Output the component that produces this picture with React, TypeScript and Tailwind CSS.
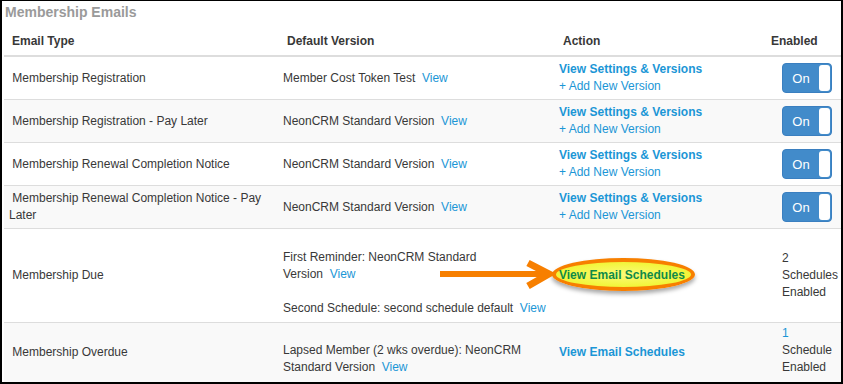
import React from "react";

const LINK = "text-[#1b96d6]";

function Toggle() {
  return (
    <div className="flex w-[50px] h-[30px] rounded-[4px] bg-[#428bca] border border-[#3a7fc0] py-[1px] pr-[1px]">
      <div className="flex-1 flex items-center justify-center text-white text-[13px] leading-none">On</div>
      <div className="w-[11px] bg-white rounded-[3px]" />
    </div>
  );
}

function Row({
  name,
  version,
  bg,
  first,
}: {
  name: React.ReactNode;
  version: string;
  bg?: boolean;
  first?: boolean;
}) {
  return (
    <div
      className={`grid grid-cols-[275px_276px_208px_78px] ${first ? "h-[42px]" : "h-[43px] border-t border-[#dddddd]"} ${bg ? "bg-[#f9f9f9]" : "bg-white"}`}
    >
      <div className="pl-[5px] flex items-center">
        <div>{name}</div>
      </div>
      <div className="pl-[4px] flex items-center">
        <div>
          {version}
          {"\u00a0 "}
          <span className={LINK}>View</span>
        </div>
      </div>
      <div className="pl-[4px] flex items-center">
        <div>
          <div className={`font-bold ${LINK}`}>View Settings &amp; Versions</div>
          <div className={LINK}>+ Add New Version</div>
        </div>
      </div>
      <div className="pl-[19px] flex items-center">
        <Toggle />
      </div>
    </div>
  );
}

export default function App() {
  return (
    <div className="relative w-[843px] h-[384px] overflow-hidden bg-white border-l-2 border-r-2 border-t border-b-2 border-black text-[12px] leading-[17px] text-[#383838] font-['Liberation_Sans',Arial,sans-serif]">
      <div className="h-[27px] pl-[3px] text-[14px] leading-[23px] font-bold text-[#9a9a9a]">
        Membership Emails
      </div>
      <div className="ml-[2px] w-[837px]">
        <div className="grid grid-cols-[275px_276px_208px_78px] h-[29px] border-b-2 border-[#dddddd] font-bold items-center">
          <div className="pl-[8px]">Email Type</div>
          <div className="pl-[8px]">Default Version</div>
          <div className="pl-[8px]">Action</div>
          <div className="pl-[8px]">Enabled</div>
        </div>
        <Row first name={"\u00a0Membership Registration"} version="Member Cost Token Test" />
        <Row bg name={"\u00a0Membership Registration - Pay Later"} version="NeonCRM Standard Version" />
        <Row name={"\u00a0Membership Renewal Completion Notice"} version="NeonCRM Standard Version" />
        <Row
          bg
          name={
            <>
              {"\u00a0Membership Renewal Completion Notice - Pay"}
              <br />
              Later
            </>
          }
          version="NeonCRM Standard Version"
        />
        {/* Membership Due */}
        <div className="grid grid-cols-[275px_276px_208px_78px] h-[94px] border-t border-[#dddddd] bg-white">
          <div className="pl-[5px] pb-[1px] flex items-center">
            <div>{"\u00a0Membership Due"}</div>
          </div>
          <div className="pl-[4px] pt-[20px]">
            <div>First Reminder: NeonCRM Standard</div>
            <div>
              Version{"\u00a0 "}
              <span className={LINK}>View</span>
            </div>
            <div className="mt-[17px] whitespace-nowrap">
              Second Schedule: second schedule default{"\u00a0 "}
              <span className={LINK}>View</span>
            </div>
          </div>
          <div className="pl-[4px] pb-[1px] flex items-center">
            <span className="relative inline-block font-bold text-[#0f8a47]">
              <span className="absolute left-[-7px] right-[-10px] top-[-9px] bottom-[-7px] rounded-[50%] border-[4px] border-[#f77f00] bg-[radial-gradient(ellipse_at_center,#fafb78_0%,#f3f53c_65%,#e3ea2c_100%)] shadow-[0_3px_4px_rgba(0,0,0,0.35)]" />
              <span className="relative">View Email Schedules</span>
            </span>
          </div>
          <div className="pl-[19px] pb-[1px] flex items-center">
            <div>
              <div>2</div>
              <div>Schedules</div>
              <div>Enabled</div>
            </div>
          </div>
        </div>
        {/* Membership Overdue */}
        <div className="grid grid-cols-[275px_276px_208px_78px] h-[60px] border-t border-[#dddddd] bg-[#f9f9f9]">
          <div className="pl-[5px] flex items-center">
            <div>{"\u00a0Membership Overdue"}</div>
          </div>
          <div className="pl-[4px] pt-[19px]">
            <div>Lapsed Member (2 wks overdue): NeonCRM</div>
            <div>
              Standard Version{"\u00a0 "}
              <span className={LINK}>View</span>
            </div>
          </div>
          <div className="pl-[4px] flex items-center">
            <span className={`font-bold ${LINK}`}>View Email Schedules</span>
          </div>
          <div className="pl-[19px] pt-[2px]">
            <div className={LINK}>1</div>
            <div>Schedule</div>
            <div>Enabled</div>
          </div>
        </div>
      </div>
      <svg
        className="absolute left-[-2px] top-[-1px] pointer-events-none"
        width="843"
        height="384"
        viewBox="0 0 843 384"
      >
        <line x1="440" y1="274" x2="546" y2="274" stroke="#f77f00" strokeWidth="6" />
        <polyline
          points="528,263 549,274 528,286"
          fill="none"
          stroke="#f77f00"
          strokeWidth="7"
          strokeLinejoin="miter"
        />
      </svg>
    </div>
  );
}
